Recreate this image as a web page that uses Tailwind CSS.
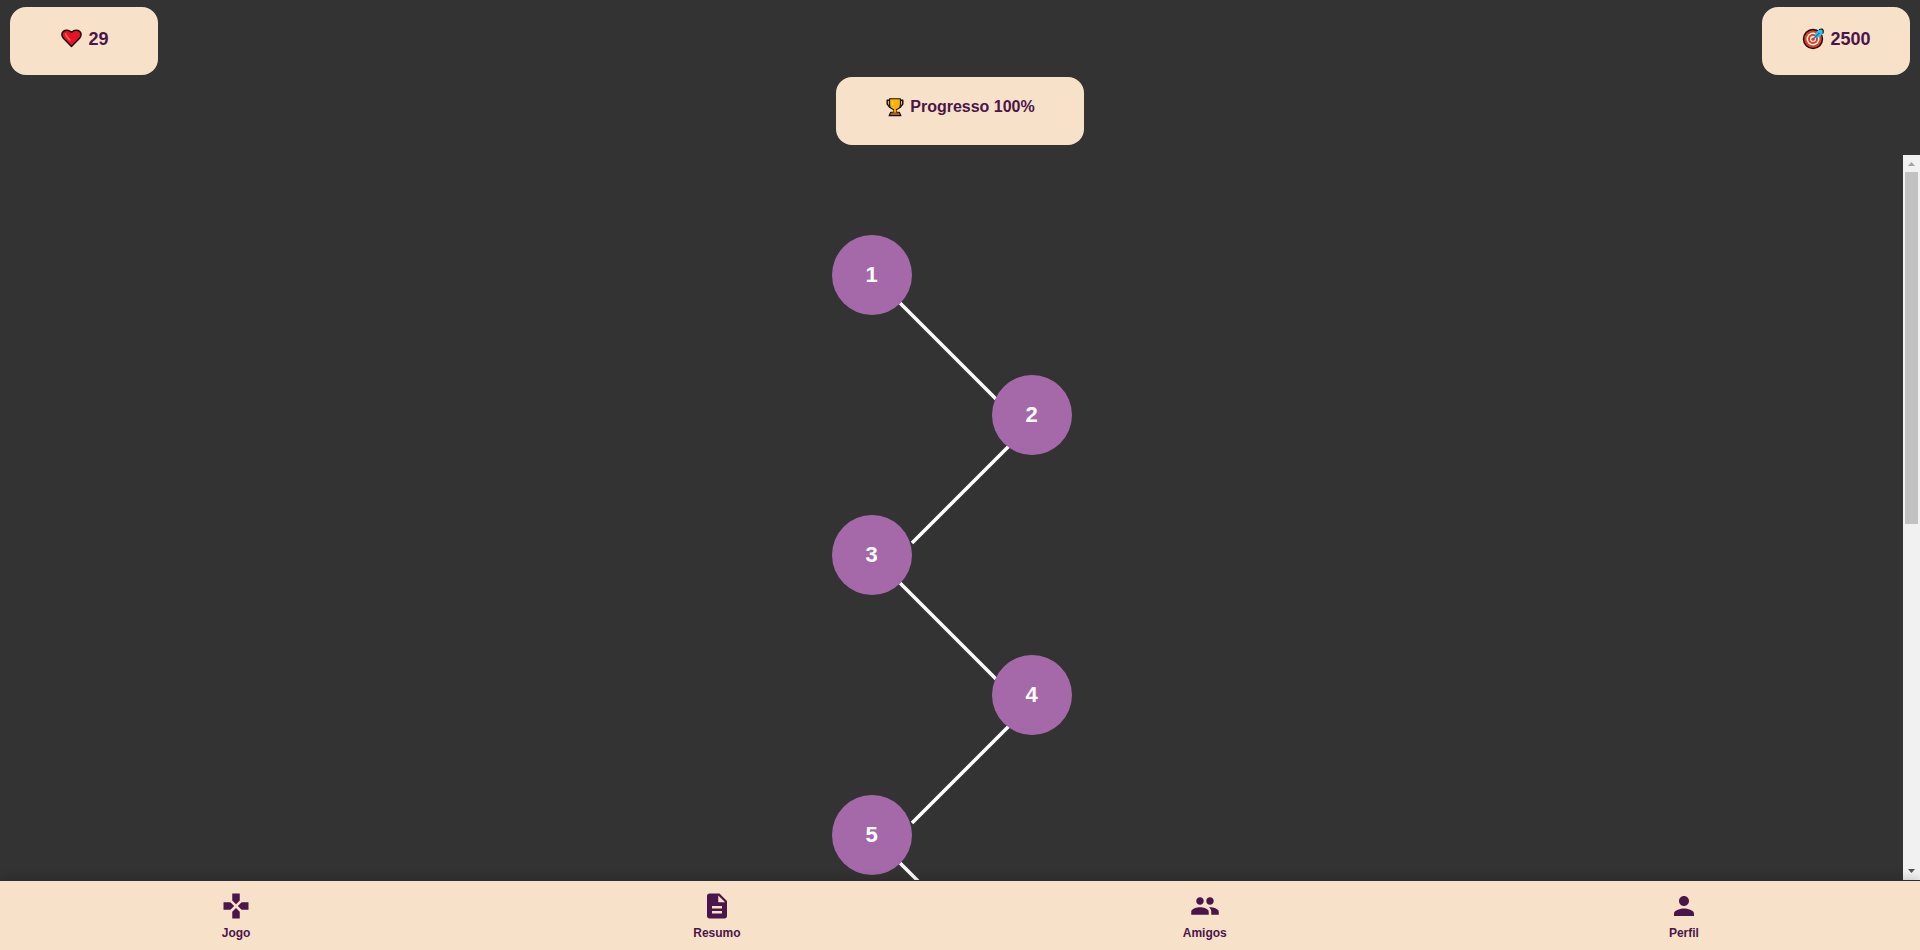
<!DOCTYPE html>
<html lang="pt-BR">
<head>
<meta charset="utf-8">
<meta name="viewport" content="width=device-width, initial-scale=1">
<title>Jogo</title>
<script src="https://cdn.jsdelivr.net/npm/@tailwindcss/browser@4"></script>
</head>
<body class="flex h-screen flex-col overflow-hidden bg-[#333333] font-['Liberation_Sans',Arial,sans-serif] font-bold text-[#4a154b]">
  <header class="shrink-0 pt-[7px]">
    <div class="flex justify-between px-[10px]">
      <div class="flex w-[148px] items-center justify-center gap-[5px] rounded-2xl bg-[#f8e1c9] pt-5 pb-6 text-lg leading-6">
        <svg class="size-6" viewBox="-1 0 25 25" aria-hidden="true">
          <path d="M12 20.200 3.800 12C1.300 9.400 1.500 6.200 3.500 4.600 5.900 2.600 9.600 2.900 12 5.700 14.400 2.900 18.100 2.600 20.500 4.600 22.500 6.200 22.700 9.400 20.200 12Z" fill="#e81224" stroke="#111" stroke-width="1.500" stroke-linejoin="round"/>
          <path d="M6 7.200c.2 2.500 1.800 4 4.300 6.200" fill="none" stroke="#f4634f" stroke-width="1.800" stroke-linecap="round"/>
        </svg>
        <span>29</span>
      </div>
      <div class="flex w-[148px] items-center justify-center gap-[5px] rounded-2xl bg-[#f8e1c9] pt-5 pb-6 text-lg leading-6">
        <svg class="size-6" viewBox="-0.5 0 24 24" aria-hidden="true">
          <circle cx="11.500" cy="12" r="9.500" fill="#e8391d" stroke="#111" stroke-width="1.400"/>
          <circle cx="11.500" cy="12" r="6.500" fill="#fff"/>
          <circle cx="11.500" cy="12" r="5" fill="#e8391d"/>
          <circle cx="11.500" cy="12" r="3" fill="#fff"/>
          <circle cx="11.500" cy="12.200" r="1.700" fill="#e8391d"/>
          <path d="M13.500 9.800V6.500L17.500 2.500H20.500L21.500 3.500V6.500L17.500 10.500H14Z" fill="#27c6f5"/>
          <path d="M17.500 2.500 20.500 2 21.800 3.300 21.500 6.500" fill="none" stroke="#111" stroke-width="1.200" stroke-linejoin="round"/>
          <path d="M11.800 12 18 5.800" stroke="#1976b8" stroke-width="1.300"/>
        </svg>
        <span>2500</span>
      </div>
    </div>
    <div class="mx-auto mt-[2px] flex w-[248px] items-center justify-center gap-[5px] rounded-2xl bg-[#f8e1c9] pt-5 pb-7 text-base leading-5">
      <svg class="size-5" viewBox="0 0 21 21" aria-hidden="true">
        <path d="M5.500 3.500H2.300v4L5 10.800H7M15.500 3.500h3.200v4L16 10.800H14" fill="#f6b21b" stroke="#111" stroke-width="1.500" stroke-linejoin="round"/>
        <path d="M4.800 1.800h11.400v6.400c0 2.800-1.700 4.300-4.200 4.900v2.600H9v-2.600c-2.500-.6-4.200-2.100-4.200-4.900Z" fill="#ffb300" stroke="#111" stroke-width="1.200" stroke-linejoin="round"/>
        <path d="M8 4.500v4" stroke="#ffe08a" stroke-width="1"/>
        <path d="M6 16h9l1.700 3.600H4.300Z" fill="#a5601f" stroke="#111" stroke-width="1.200" stroke-linejoin="round"/>
        <path d="M9 13.500h3v3H9Z" fill="#f0a010"/>
      </svg>
      <span>Progresso 100%</span>
    </div>
  </header>

  <main class="mt-[10px] mb-px flex min-h-0 flex-1 overflow-hidden">
    <div class="flex flex-1 justify-center overflow-hidden pt-20">
      <div class="relative w-[240px]">
        <svg class="absolute top-0 left-0" width="240" height="660" viewBox="0 0 240 660" fill="none" stroke="#fff" stroke-width="3.500" aria-hidden="true">
          <path d="M68 68 164 164M177 211 80 308M68 348 164 444M177 491 80 588M68 628 100 660"/>
        </svg>
        <ol class="relative flex flex-col gap-[60px] text-[22px] text-white">
          <li><button type="button" class="block size-20 rounded-full bg-[#a569a9] pb-[2px]">1</button></li>
          <li class="self-end"><button type="button" class="block size-20 rounded-full bg-[#a569a9] pb-[2px]">2</button></li>
          <li><button type="button" class="block size-20 rounded-full bg-[#a569a9] pb-[2px]">3</button></li>
          <li class="self-end"><button type="button" class="block size-20 rounded-full bg-[#a569a9] pb-[2px]">4</button></li>
          <li><button type="button" class="block size-20 rounded-full bg-[#a569a9] pb-[2px]">5</button></li>
        </ol>
      </div>
    </div>
    <div class="flex w-[17px] shrink-0 flex-col items-center bg-[#f1f1f1]" aria-hidden="true">
      <svg class="size-[17px] shrink-0" viewBox="0 0 17 17" fill="#a3a3a3"><path d="M5 11 8.500 7 12 11Z"/></svg>
      <div class="min-h-0 w-[13px] flex-1"><div class="h-[51%] bg-[#c1c1c1]"></div></div>
      <svg class="size-[17px] shrink-0" viewBox="0 0 17 17" fill="#505050"><path d="M5 6 8.500 10 12 6Z"/></svg>
    </div>
  </main>

  <nav class="relative flex shrink-0 justify-around bg-[#f8e1c9] py-[10px] text-xs leading-[14px] shadow-[0_-2px_10px_rgba(0,0,0,0.2)]">
    <a href="#jogo" class="flex flex-col items-center gap-[5px]">
      <svg class="size-[30px]" viewBox="0 0 24 24" fill="currentColor" aria-hidden="true"><path d="M15 7.500V2H9v5.500l3 3 3-3zM7.500 9H2v6h5.500l3-3-3-3zM9 16.500V22h6v-5.500l-3-3-3 3zM16.500 9l-3 3 3 3H22V9h-5.500z"/></svg>
      <span>Jogo</span>
    </a>
    <a href="#resumo" class="flex flex-col items-center gap-[5px]">
      <svg class="size-[30px]" viewBox="0 0 24 24" fill="currentColor" aria-hidden="true"><path d="M14 2H6c-1.100 0-1.990.9-1.990 2L4 20c0 1.100.89 2 1.990 2H18c1.100 0 2-.9 2-2V8l-6-6zm2 16H8v-2h8v2zm0-4H8v-2h8v2zm-3-5V3.500L18.500 9H13z"/></svg>
      <span>Resumo</span>
    </a>
    <a href="#amigos" class="flex flex-col items-center gap-[5px]">
      <svg class="size-[30px]" viewBox="0 0 24 24" fill="currentColor" aria-hidden="true"><path d="M16 11c1.660 0 2.990-1.340 2.990-3S17.660 5 16 5c-1.660 0-3 1.340-3 3s1.340 3 3 3zm-8 0c1.660 0 2.990-1.340 2.990-3S9.660 5 8 5C6.340 5 5 6.340 5 8s1.340 3 3 3zm0 2c-2.330 0-7 1.170-7 3.500V19h14v-2.500c0-2.330-4.670-3.500-7-3.500zm8 0c-.29 0-.62.020-.97.050 1.160.840 1.970 1.970 1.970 3.450V19h6v-2.500c0-2.330-4.670-3.500-7-3.500z"/></svg>
      <span>Amigos</span>
    </a>
    <a href="#perfil" class="flex flex-col items-center gap-[5px]">
      <svg class="size-[30px]" viewBox="0 0 24 24" fill="currentColor" aria-hidden="true"><path d="M12 12c2.210 0 4-1.790 4-4s-1.790-4-4-4-4 1.790-4 4 1.790 4 4 4zm0 2c-2.670 0-8 1.340-8 4v2h16v-2c0-2.660-5.330-4-8-4z"/></svg>
      <span>Perfil</span>
    </a>
  </nav>
</body>
</html>
